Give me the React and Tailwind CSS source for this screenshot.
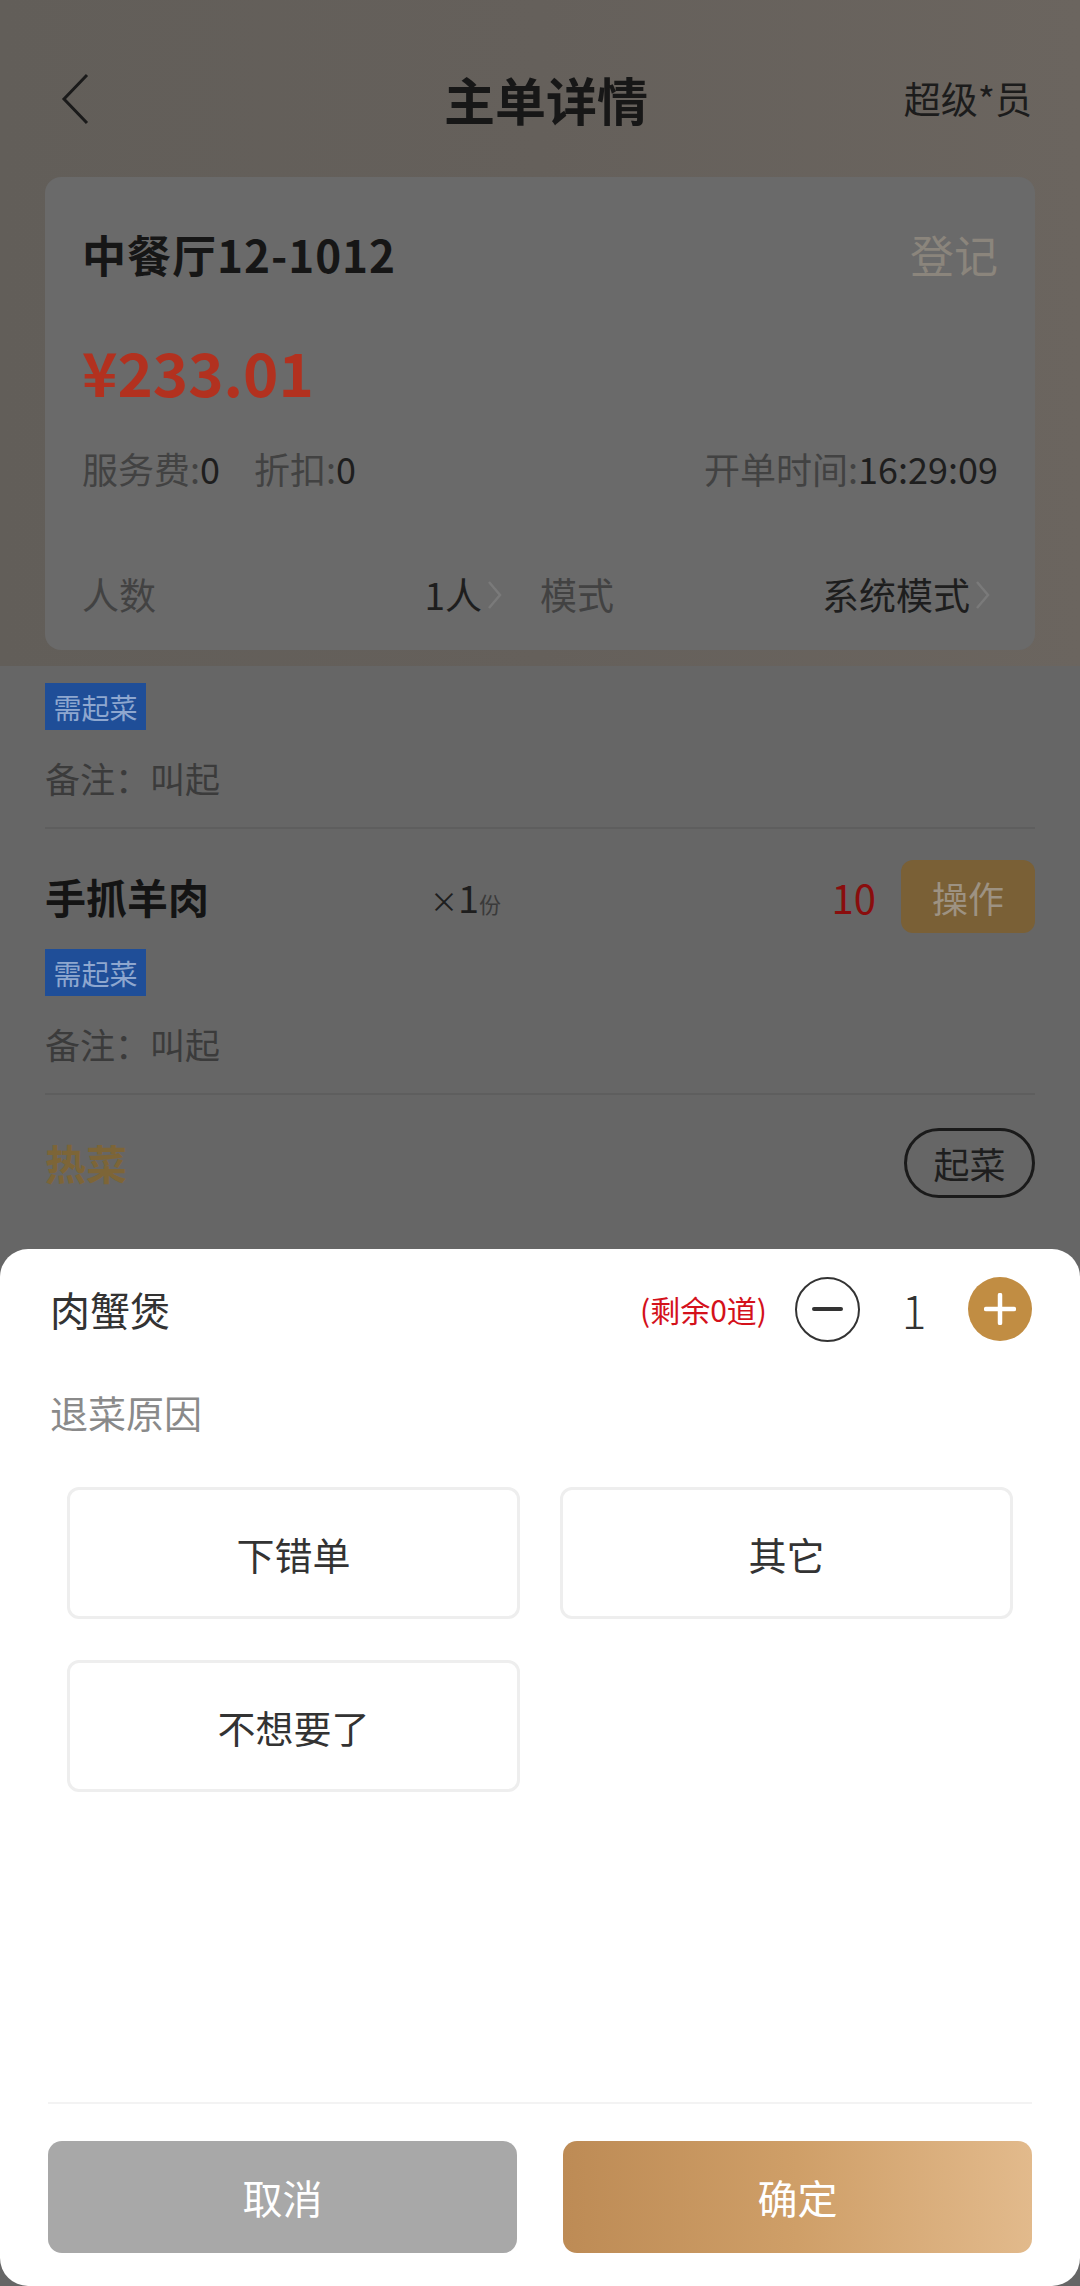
import React from 'react'

const Chevron = () => (
	<svg width="16" height="32" viewBox="0 0 16 32" className="ml-[5px] mr-[7px]">
		<polyline points="2,3 13,16 2,29" fill="none" stroke="#7a7a7a" strokeWidth="2.5" />
	</svg>
)

const Tag = () => (
	<div className="flex h-[47px] w-[101px] items-center justify-center bg-[#1f4e98] text-[28px] text-[#8ea7cf]">
		需起菜
	</div>
)

const Remark = () => (
	<div className="flex h-[48px] items-center text-[35px] text-[#3b3b3b]">备注：叫起</div>
)

const reasons = ['下错单', '其它', '不想要了']

const App = () => {
	return (
		<div className="relative h-[2286px] w-[1080px] overflow-hidden bg-[#666666] font-['Noto_Sans_CJK_SC','Noto_Sans',sans-serif]">
			{/* dimmed page behind the sheet */}
			<div className="bg-gradient-to-r from-[#625e59] via-[#65605b] to-[#6b655f] pb-[16px]">
				<div className="box-content grid h-[110px] grid-cols-[1fr_auto_1fr] items-center pl-[60px] pr-[48px] pt-[44px]">
					<svg width="30" height="52" viewBox="0 0 30 52">
						<polyline points="27,2 4,26 27,50" fill="none" stroke="#1a1a1a" strokeWidth="3" />
					</svg>
					<div className="text-[51px] font-bold text-[#171717]">主单详情</div>
					<div className="text-right text-[37px] text-[#1c1c1c]">超级*员</div>
				</div>

				<div className="mx-[45px] mt-[23px] rounded-[16px] bg-[#6a6a6a] px-[37px] pb-[30px] pt-[48px]">
					<div className="flex h-[58px] items-center justify-between">
						<div className="text-[44px] font-bold tracking-[1px] text-[#161616]">中餐厅12-1012</div>
						<div className="text-[44px] text-[#8b857c]">登记</div>
					</div>
					<div className="mt-[52px] flex h-[72px] items-center text-[60px] font-bold leading-none text-[#b2311f]">
						¥233.01
					</div>
					<div className="mt-[37px] flex h-[48px] items-center justify-between text-[36px]">
						<div className="flex">
							<span className="text-[#424242]">服务费:</span>
							<span className="text-[#1e1e1e]">0</span>
							<span className="ml-[34px] text-[#424242]">折扣:</span>
							<span className="text-[#1e1e1e]">0</span>
						</div>
						<div className="flex">
							<span className="text-[#424242]">开单时间:</span>
							<span className="text-[#1e1e1e]">16:29:09</span>
						</div>
					</div>
					<div className="mt-[78px] flex h-[50px] items-center text-[37px]">
						<div className="flex w-[428px] items-center justify-between">
							<span className="text-[#424242]">人数</span>
							<span className="flex items-center text-[#1e1e1e]">
								1人
								<Chevron />
							</span>
						</div>
						<div className="ml-[30px] flex flex-1 items-center justify-between">
							<span className="text-[#424242]">模式</span>
							<span className="flex items-center text-[#1e1e1e]">
								系统模式
								<Chevron />
							</span>
						</div>
					</div>
				</div>
			</div>

			<div className="px-[45px] pt-[17px]">
				<Tag />
				<div className="mt-[24px]">
					<Remark />
				</div>
				<div className="mt-[25px] h-[2px] bg-[#5e5e5e]" />

				<div className="mt-[31px] flex h-[73px] items-center">
					<div className="w-[385px] text-[41px] font-bold text-[#141414]">手抓羊肉</div>
					<div className="flex items-baseline text-[#1e1e1e]">
						<span className="text-[28px]">×</span>
						<span className="text-[38px]">1</span>
						<span className="text-[22px] text-[#3a3a3a]">份</span>
					</div>
					<div className="flex-1" />
					<div className="text-[40px] text-[#8a0d0d]">10</div>
					<div className="ml-[25px] flex h-[73px] w-[134px] items-center justify-center rounded-[12px] bg-[#7a6036] text-[36px] text-[#9d9282]">
						操作
					</div>
				</div>
				<div className="mt-[16px]">
					<Tag />
				</div>
				<div className="mt-[24px]">
					<Remark />
				</div>
				<div className="mt-[25px] h-[2px] bg-[#5e5e5e]" />

				<div className="mt-[33px] flex h-[70px] items-center justify-between">
					<div className="text-[41px] font-bold text-[#7d6537]">热菜</div>
					<div className="flex h-[70px] w-[131px] items-center justify-center rounded-full border-[3px] border-[#1a1a1a] text-[36px] text-[#1e1e1e]">
						起菜
					</div>
				</div>
			</div>

			{/* bottom sheet */}
			<div className="absolute bottom-0 left-0 right-0 flex h-[1037px] flex-col rounded-[28px] bg-white">
				<div className="mt-[27px] flex h-[66px] items-center pl-[50px] pr-[48px]">
					<div className="text-[40px] text-[#333333]">肉蟹煲</div>
					<div className="flex-1" />
					<div className="text-[30px] text-[#d4111b]">(剩余0道)</div>
					<div className="ml-[28px] flex h-[65px] w-[65px] items-center justify-center rounded-full border-2 border-[#333333]">
						<div className="h-[4px] w-[31px] rounded-full bg-[#333333]" />
					</div>
					<div className="w-[108px] text-center text-[46px] font-light text-[#333333]">1</div>
					<div className="flex h-[64px] w-[64px] items-center justify-center rounded-full bg-[#c18d43]">
						<svg width="32" height="32" viewBox="0 0 32 32">
							<line x1="16" y1="2" x2="16" y2="30" stroke="white" strokeWidth="4.5" strokeLinecap="round" />
							<line x1="2" y1="16" x2="30" y2="16" stroke="white" strokeWidth="4.5" strokeLinecap="round" />
						</svg>
					</div>
				</div>

				<div className="ml-[50px] mt-[45px] flex h-[48px] items-center text-[38px] text-[#8a8a8a]">退菜原因</div>

				<div className="ml-[67px] mt-[52px] grid w-[946px] grid-cols-2 gap-x-[40px] gap-y-[41px]">
					{reasons.map(r => (
						<div
							key={r}
							className="flex h-[132px] items-center justify-center rounded-[12px] border-[3px] border-[#eeeeee] text-[38px] text-[#333333]"
						>
							{r}
						</div>
					))}
				</div>

				<div className="flex-1" />
				<div className="mx-[48px] h-[2px] bg-[#f3f3f3]" />
				<div className="mb-[33px] mt-[37px] flex gap-[46px] px-[48px]">
					<button className="flex h-[112px] flex-1 items-center justify-center rounded-[14px] bg-[#a8a8a8] text-[40px] text-white">
						取消
					</button>
					<button className="flex h-[112px] flex-1 items-center justify-center rounded-[14px] bg-gradient-to-r from-[#bd8b55] via-[#cf9f68] to-[#e2ba8c] text-[40px] text-white">
						确定
					</button>
				</div>
			</div>
		</div>
	)
}

export default App
